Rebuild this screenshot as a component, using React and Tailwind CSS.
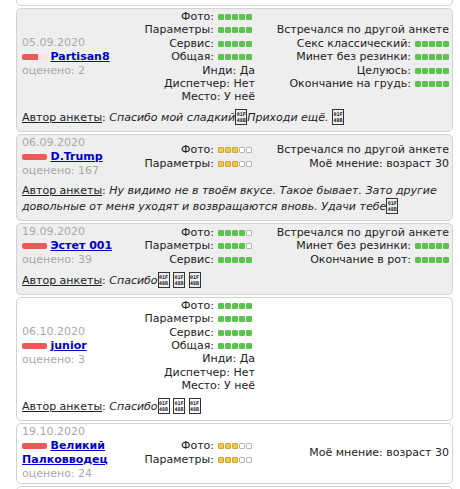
import React from 'react'

const Dots = ({ on, color = 'g', trail = false }) => (
  <span className={`inline-flex gap-[1px] ml-[4px] ${trail ? 'mr-[3px]' : ''}`}>
    {[0, 1, 2, 3, 4].map((i) => (
      <span
        key={i}
        className={`w-[6px] h-[6px] rounded-[1px] border ${
          i < on
            ? color === 'g'
              ? 'bg-[#5cc350] border-[#5cc350]'
              : 'bg-[#f3c943] border-[#c9a53c]'
            : 'bg-white border-[#b4b4b4]'
        }`}
      />
    ))}
  </span>
)

// missing-glyph box for 💋 (U+1F48B) as the browser drew it
const Tofu = () => (
  <span className="inline-block overflow-hidden w-[12px] h-[16px] border border-[#333] align-[-4px] not-italic text-center font-['DejaVu_Sans_Mono',monospace] text-[5px] leading-[6px] font-bold pt-[1px]">
    <span className="block">01F</span>
    <span className="block">48B</span>
  </span>
)

const Row = ({ label, text, dots, color, trail }) => (
  <div className="whitespace-nowrap">
    {label}
    {text ? ` ${text}` : ''}
    {dots !== undefined && <Dots on={dots} color={color} trail={trail} />}
  </div>
)

const reviews = [
  {
    date: '05.09.2020', name: 'Partisan8', part: true, count: 2,
    mid: [
      { label: 'Фото:', dots: 5 }, { label: 'Параметры:', dots: 5 }, { label: 'Сервис:', dots: 5 },
      { label: 'Общая:', dots: 5 }, { label: 'Инди:', text: 'Да' }, { label: 'Диспетчер:', text: 'Нет' },
      { label: 'Место:', text: 'У неё' },
    ],
    right: [
      { label: 'Встречался по другой анкете' }, { label: 'Секс классический:', dots: 5 },
      { label: 'Минет без резинки:', dots: 5 }, { label: 'Целуюсь:', dots: 5 },
      { label: 'Окончание на грудь:', dots: 5 },
    ],
    comment: <>Спасибо мой сладкий<Tofu />Приходи ещё. <Tofu /></>,
  },
  {
    date: '06.09.2020', name: 'D.Trump', count: 167,
    mid: [{ label: 'Фото:', dots: 3, color: 'y' }, { label: 'Параметры:', dots: 3, color: 'y' }],
    right: [{ label: 'Встречался по другой анкете' }, { label: 'Моё мнение:', text: 'возраст 30' }],
    comment: <>Ну видимо не в твоём вкусе. Такое бывает. Зато другие довольные от меня уходят и возвращаются вновь. Удачи тебе<Tofu /></>,
  },
  {
    date: '19.09.2020', name: 'Эстет 001', count: 39,
    mid: [{ label: 'Фото:', dots: 4 }, { label: 'Параметры:', dots: 4 }, { label: 'Сервис:', dots: 5 }],
    right: [
      { label: 'Встречался по другой анкете' }, { label: 'Минет без резинки:', dots: 5 },
      { label: 'Окончание в рот:', dots: 5 },
    ],
    comment: <>Спасибо<Tofu /> <Tofu /> <Tofu /></>,
  },
  {
    date: '06.10.2020', name: 'junior', count: 3, white: true,
    mid: [
      { label: 'Фото:', dots: 5 }, { label: 'Параметры:', dots: 5 }, { label: 'Сервис:', dots: 5 },
      { label: 'Общая:', dots: 5 }, { label: 'Инди:', text: 'Да' }, { label: 'Диспетчер:', text: 'Нет' },
      { label: 'Место:', text: 'У неё' },
    ],
    right: [],
    comment: <>Спасибо<Tofu /> <Tofu /> <Tofu /></>,
  },
  {
    date: '19.10.2020', name: 'Великий Палковводец', count: 24, white: true,
    mid: [{ label: 'Фото:', dots: 3, color: 'y' }, { label: 'Параметры:', dots: 3, color: 'y' }],
    right: [{ label: 'Моё мнение:', text: 'возраст 30' }],
  },
]

function Review({ r }) {
  return (
    <div className={`mt-[2px] rounded-[5px] border border-[#d2d2d2] pl-[5px] pr-[3px] pt-[1px] pb-[2px] ${r.white ? 'bg-white' : 'bg-[#eeeeee]'}`}>
      <div className="grid grid-cols-[118px_115px_1fr] items-center">
        <div className="leading-[14px]">
          <div className="text-[#a8a8a8]">{r.date}</div>
          <div>
            <span className="inline-flex w-[25px] h-[6px] rounded-[2px] overflow-hidden bg-[#fde0e0] align-middle">
              <span className={`bg-[#f05858] ${r.part ? 'w-[16px]' : 'w-full'}`} />
            </span>{' '}
            <a className="font-bold text-[#0000cc] underline">{r.name}</a>
          </div>
          <div className="text-[#a8a8a8]">оценено: {r.count}</div>
        </div>
        <div className="text-right leading-[13.4px]">
          {r.mid.map((row, i) => <Row key={i} {...row} trail />)}
        </div>
        <div className="text-right leading-[13.4px]">
          {r.right.map((row, i) => <Row key={i} {...row} />)}
        </div>
      </div>
      {r.comment && (
        <div className="mt-[5px] mb-[4px] leading-[15px]">
          <span className="underline">Автор анкеты</span>: <i>{r.comment}</i>
        </div>
      )}
    </div>
  )
}

export default function App() {
  return (
    <div className="w-[460px] h-[489px] overflow-hidden bg-white pl-[16px] pr-[7px] font-['DejaVu_Sans',Verdana,sans-serif] text-[11px] text-[#222]">
      <div className="h-[6px] rounded-b-[5px] border-x border-b border-[#d2d2d2] bg-white" />
      {reviews.map((r, i) => <Review key={i} r={r} />)}
      <div className="mt-[2px] h-[20px] rounded-t-[5px] border border-[#d2d2d2] bg-white" />
    </div>
  )
}
